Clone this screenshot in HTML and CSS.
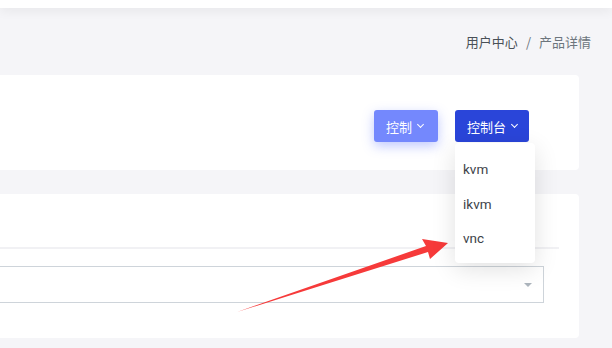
FILE: index.html
```html
<!DOCTYPE html>
<html lang="zh-CN">
<head>
    <meta charset="UTF-8">
    <title>产品详情</title>
    <link rel="stylesheet" href="styles.css">
</head>
<body>
    <header class="topbar"></header>

    <main class="page">
        <!-- Breadcrumb -->
        <div class="breadcrumb">
            <span class="crumb">用户中心</span>
            <span class="sep">/</span>
            <span class="crumb current">产品详情</span>
        </div>

        <!-- Product actions -->
        <section class="card actions-card">
            <div class="actions">
                <button class="btn btn-light">控制 <span class="caret"></span></button>
                <div class="dropdown">
                    <button class="btn btn-primary">控制台 <span class="caret"></span></button>
                    <ul class="menu">
                        <li>kvm</li>
                        <li>ikvm</li>
                        <li>vnc</li>
                    </ul>
                </div>
            </div>
        </section>

        <!-- Detail card -->
        <section class="card detail-card">
            <div class="tabs"></div>
            <div class="select-row">
                <div class="select"><span class="select-arrow"></span></div>
            </div>
        </section>
    </main>

    <!-- Annotation arrow -->
    <svg class="annot" width="612" height="348" viewBox="0 0 612 348">
        <path d="M237 312 L426 246 L422 239 L448 243 L430 259 L428 252 Z" fill="#f63a3a"/>
    </svg>
</body>
</html>
```

FILE: styles.css
```css
body {
    margin: 0;
    background: #f5f5f8;
    font-family: "Noto Sans CJK SC", "Noto Sans", sans-serif;
    overflow: hidden;
    position: relative;
}

.topbar {
    height: 8px;
    background: #fff;
    box-shadow: 0 2px 12px rgba(0, 0, 0, 0.08);
}

.page {
    width: 579px;
}

/* Breadcrumb */
.breadcrumb {
    display: flex;
    justify-content: flex-end;
    align-items: center;
    gap: 8px;
    height: 67px;
    margin-right: -12px;
    font-size: 13px;
    color: #6c757d;
}

.breadcrumb .crumb {
    color: #495057;
}

.breadcrumb .current {
    color: #6c757d;
}

/* Cards */
.card {
    background: #fff;
    border-radius: 0 4px 4px 0;
}

.actions-card {
    height: 95px;
    box-sizing: border-box;
    padding: 35px 50px 0 0;
}

.actions {
    display: flex;
    justify-content: flex-end;
    gap: 17px;
}

.btn {
    height: 32px;
    border: none;
    border-radius: 3px;
    color: #fff;
    font-family: inherit;
    font-size: 13px;
    padding: 0 12px 0 12px;
    display: flex;
    align-items: center;
    gap: 6px;
}

.btn-light {
    width: 64px;
    background: #7488fd;
    box-shadow: 0 4px 12px rgba(116, 136, 253, 0.45);
}

.btn-primary {
    width: 74px;
    background: #2a45d9;
}

.caret {
    width: 4px;
    height: 4px;
    border-right: 1.5px solid #fff;
    border-bottom: 1.5px solid #fff;
    transform: rotate(45deg);
    margin-top: -3px;
}

.dropdown {
    position: relative;
}

.menu {
    position: absolute;
    top: 33px;
    left: 0;
    width: 80px;
    height: 120px;
    margin: 0;
    padding: 12px 0 0;
    box-sizing: border-box;
    list-style: none;
    background: #fff;
    border-radius: 4px;
    box-shadow: 0 6px 24px rgba(0, 0, 0, 0.12);
    z-index: 2;
}

.menu li {
    height: 34.5px;
    line-height: 28px;
    padding-left: 8px;
    font-family: Roboto, sans-serif;
    font-size: 13.5px;
    color: #3d4349;
}

.detail-card {
    margin-top: 24px;
    height: 144px;
}

.tabs {
    height: 53px;
    margin-right: 20px;
    border-bottom: 2px solid #f1f1f4;
}

.select-row {
    padding: 17px 35px 0 0;
}

.select {
    height: 35px;
    border: 1px solid #ced4da;
    border-left: none;
    position: relative;
    display: flex;
    justify-content: flex-end;
    align-items: center;
    padding-right: 11px;
}

.select-arrow {
    width: 0;
    height: 0;
    border-left: 4px solid transparent;
    border-right: 4px solid transparent;
    border-top: 4px solid #adb5bd;
}

.annot {
    position: absolute;
    top: 0;
    left: 0;
    pointer-events: none;
}
```
